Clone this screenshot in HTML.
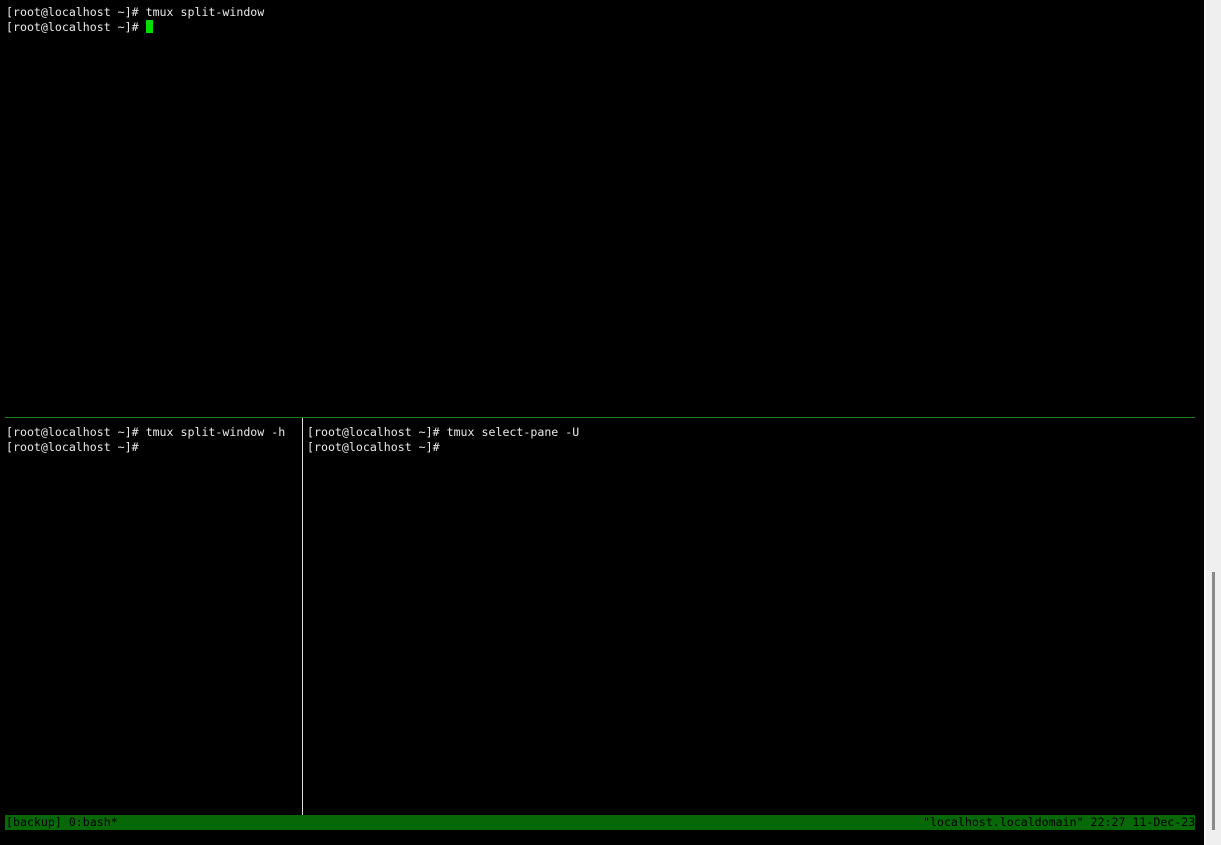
<!DOCTYPE html>
<html><head><meta charset="utf-8"><style>
body{margin:0;width:1221px;height:845px;background:#000;position:relative;overflow:hidden;font-family:"DejaVu Sans Mono","Liberation Mono",monospace;font-size:11.6px;color:#e8e8e8}
.l{position:absolute;white-space:pre;line-height:15px}
.cur{display:inline-block;width:7px;height:13px;background:#00e000;vertical-align:-2px}
</style></head><body>
<div class="l" style="left:6px;top:5px">[root@localhost ~]# tmux split-window
[root@localhost ~]# <span class="cur"></span></div>
<div style="position:absolute;left:5px;top:417px;width:1190px;height:1px;background:#1e7a1e"></div>
<div style="position:absolute;left:302px;top:418px;width:1px;height:397px;background:#e0e0e0"></div>
<div class="l" style="left:6px;top:425px">[root@localhost ~]# tmux split-window -h
[root@localhost ~]#</div>
<div class="l" style="left:307px;top:425px">[root@localhost ~]# tmux select-pane -U
[root@localhost ~]#</div>
<div style="position:absolute;left:5px;top:815px;width:1190px;height:15px;background:#066806"></div>
<div class="l" style="left:6px;top:815px;color:#000">[backup] 0:bash*</div>
<div class="l" style="left:923px;top:815px;color:#000">"localhost.localdomain" 22:27 11-Dec-23</div>
<div style="position:absolute;left:1204px;top:0;width:17px;height:845px;background:#efefef;border-left:2px solid #fafafa;box-sizing:border-box"></div>
<div style="position:absolute;left:1212px;top:572px;width:3px;height:258px;background:#8a8a8a"></div>
</body></html>
